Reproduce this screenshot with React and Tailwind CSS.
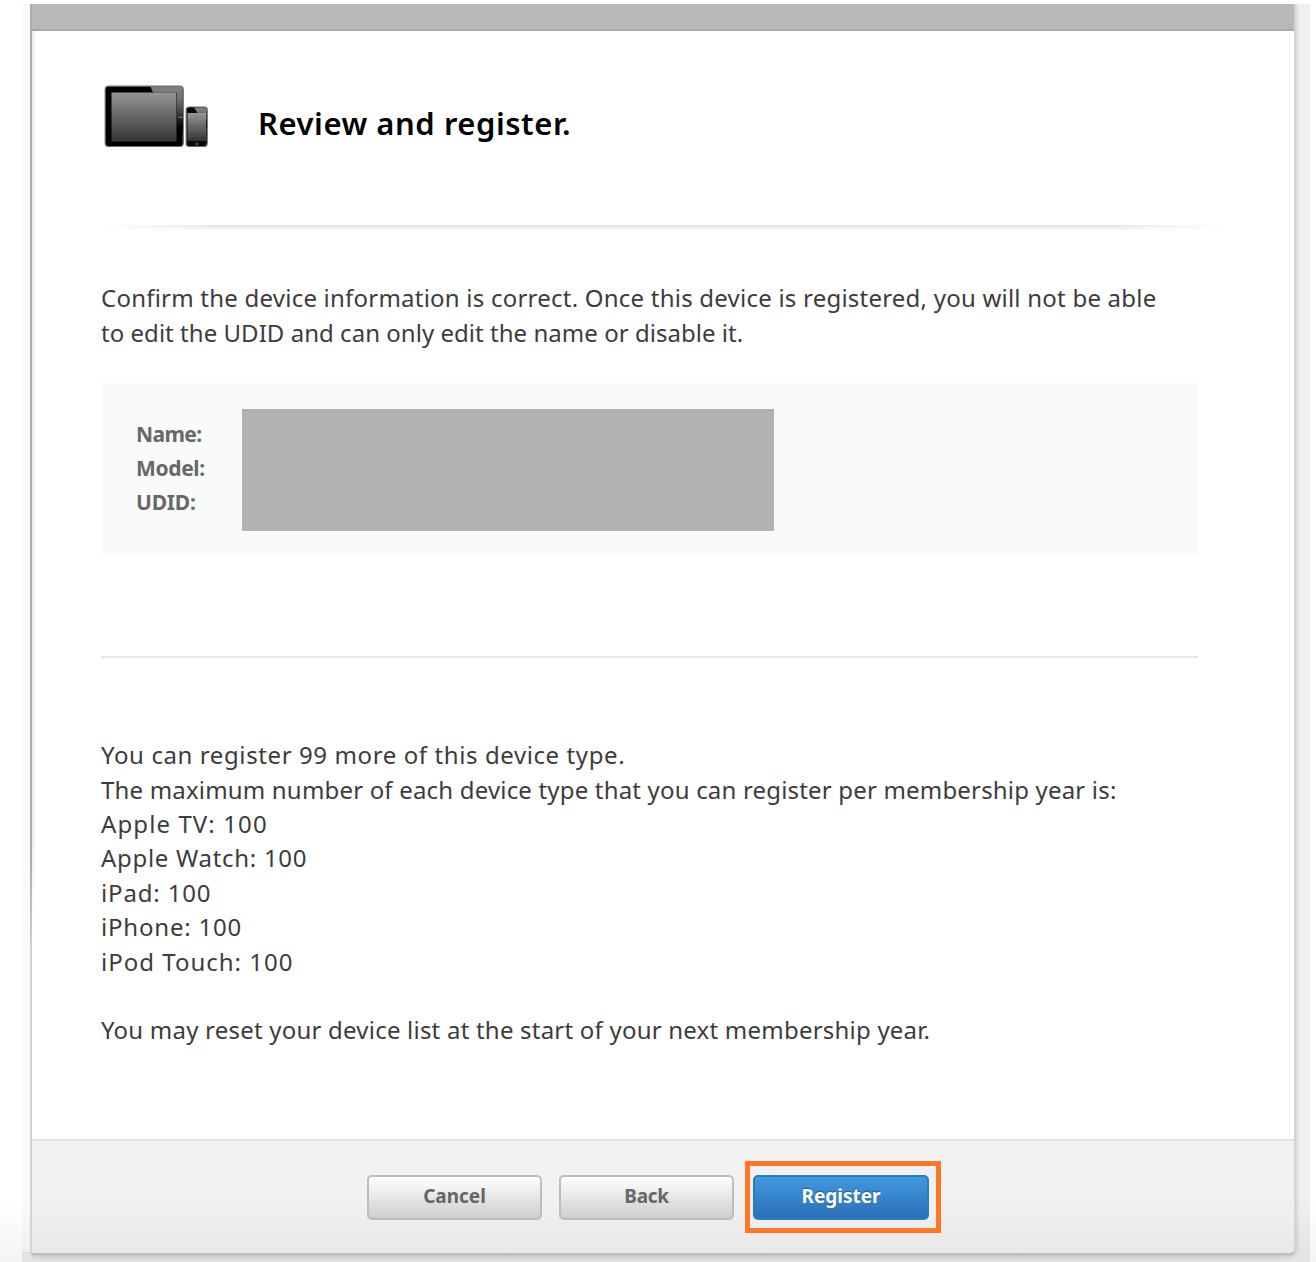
function Devices() {
  return (
    <svg className="block h-[64px] w-[106px]" viewBox="0 0 106 64">
      <defs>
        <linearGradient id="screen" x1="0" y1="0" x2="0" y2="1">
          <stop offset="0" stopColor="#969696" />
          <stop offset="1" stopColor="#343434" />
        </linearGradient>
        <linearGradient id="glare" x1="0" y1="0" x2="0" y2="1">
          <stop offset="0" stopColor="#828282" />
          <stop offset="0.3" stopColor="#6e6e6e" />
          <stop offset="0.85" stopColor="#050505" />
        </linearGradient>
      </defs>
      <rect x="2.2" y="2.2" width="78" height="60.3" rx="3.5" fill="#000" stroke="#6a6a6a" strokeWidth="1.2" />
      <path d="M47.5 2.5H77.5Q79.8 2.5 79.8 5V50L74 46V8.5H50Z" fill="url(#glare)" />
      <rect x="8.5" y="8.5" width="65" height="49" fill="url(#screen)" />
      <rect x="75.5" y="32.7" width="4" height="1.2" fill="#777" />
      <rect x="83.2" y="23" width="21" height="39.5" rx="3" fill="#080808" stroke="#6a6a6a" strokeWidth="1.2" />
      <path d="M91 23.5H101.5Q103.7 23.5 103.7 26V44L102 40V29H94.5Z" fill="url(#glare)" />
      <rect x="84.5" y="29" width="18.5" height="28" fill="url(#screen)" />
      <rect x="92.5" y="58.5" width="3" height="3" fill="#444" />
    </svg>
  );
}

const button =
  "flex h-[45px] items-center justify-center rounded-[5px] border-2 pb-[3px] text-[19px] font-bold";

export default function App() {
  return (
    <div
      className="flex h-[1262px] w-[1316px] overflow-hidden bg-linear-to-b from-white from-[1200px] to-[#f4f4f4] pl-[22px] pr-[6px] pt-1 text-[#3c3c3c]"
      style={{ fontFamily: '"Noto Sans", sans-serif' }}
    >
      <div className="flex h-[1258px] w-full overflow-hidden bg-linear-to-b from-[#f0f0f0] from-[1190px] to-[#e3e3e3]">
        <div className="z-10 flex h-[1249px] w-[10px] shrink-0 border-b border-[#d4d6d6] bg-linear-to-b from-[#f8fbfa] from-[1190px] to-[#f0f2f1]">
          <div className="ml-auto h-[1249px] w-[2px] shrink-0 bg-linear-to-b from-[#adadad] from-[860px] to-[#d2d4d4] to-[950px]" />
        </div>
        <main className="flex h-[1251px] w-[1264px] shrink-0 flex-col overflow-hidden rounded-br-[7px] border-b-2 border-r-2 border-b-[#bfbfbf] border-r-[#d4d4d4] bg-white shadow-[0_1px_4px_rgba(0,0,0,0.22)]">
          <div className="h-[27px] shrink-0 border-b-2 border-[#aaaaaa] bg-[#b8b8b8]" />
          <section className="h-[1108px] shrink-0 bg-[linear-gradient(to_bottom,transparent_800px,#ffffff_890px),linear-gradient(to_right,#e6e6e6,#ffffff)] bg-[length:4px_890px] bg-no-repeat pl-[69px] pr-[67px]">
            <header className="flex h-[194px] pl-[2px] pt-[53px]">
              <Devices />
              <h1 className="ml-[49px] mt-[17px] whitespace-nowrap text-[31px] leading-[44px] font-semibold text-black">
                <span className="tracking-[0.55px]">Review and register.</span>
              </h1>
            </header>
            <div className="h-[6px] w-[1127px] bg-linear-to-b from-[#e4e4e4] to-white mask-x-from-90%" />
            <div className="pt-[50.4px] text-[24px] leading-[34.4px] whitespace-nowrap">
              <p><span className="tracking-[0.225px]">Confirm the device information is correct. Once this device is registered, you will not be able</span></p>
              <p><span className="tracking-[0.035px]">to edit the UDID and can only edit the name or disable it.</span></p>
            </div>
            <div className="mt-[32.6px] flex h-[172px] w-[1097px] bg-[#f8fbfa] pl-[35px] pt-[26px]">
              <dl className="w-[106px] pt-[8px] text-[21px] leading-[34.2px] font-bold text-[#686868]">
                <dt><span className="tracking-[-0.6px]">Name:</span></dt>
                <dt><span className="tracking-[-0.35px]">Model:</span></dt>
                <dt><span className="tracking-[-0.2px]">UDID:</span></dt>
              </dl>
              <div className="h-[122px] w-[532px] bg-[#b2b2b2]" />
            </div>
            <hr className="mt-[101px] w-[1097px] border-t-2 border-[#e5e5e5]" />
            <div className="pt-[80.3px] text-[24px] leading-[34.4px] whitespace-nowrap">
              <p><span className="tracking-[0.6px]">You can register 99 more of this device type.</span></p>
              <p><span className="tracking-[0.18px]">The maximum number of each device type that you can register per membership year is:</span></p>
              <p><span className="tracking-[1.1px]">Apple TV: 100</span></p>
              <p><span className="tracking-[0.7px]">Apple Watch: 100</span></p>
              <p><span className="tracking-[0.85px]">iPad: 100</span></p>
              <p><span className="tracking-[0.8px]">iPhone: 100</span></p>
              <p><span className="tracking-[1px]">iPod Touch: 100</span></p>
              <p className="mt-[34.4px]"><span className="tracking-[0.215px]">You may reset your device list at the start of your next membership year.</span></p>
            </div>
          </section>
          <footer className="flex flex-1 border-t-2 border-[#e4e4e4] bg-linear-to-b from-[#f1f1f1] from-50% to-[#e9e9e9] pl-[335px] pt-[20px]">
            <div className="flex gap-[17px] pt-[14px]">
              <button className={`${button} w-[175px] border-[#bdbdbd] bg-linear-to-b from-white to-[#cecece] text-[#666]`}>Cancel</button>
              <button className={`${button} w-[175px] border-[#bdbdbd] bg-linear-to-b from-white to-[#cecece] text-[#666]`}><span className="tracking-[-0.3px]">Back</span></button>
            </div>
            <div className="ml-[11px] h-[72px] w-[196px] border-[5px] border-[#ff7624] pl-[3px] pt-[9px]">
              <button className={`${button} w-[176px] border-[#2380bb] bg-linear-to-b from-[#4199df] to-[#2b70b8] text-white text-shadow-[0_-1px_1px_rgba(0,0,0,0.35)]`}>Register</button>
            </div>
          </footer>
        </main>
      </div>
    </div>
  );
}
